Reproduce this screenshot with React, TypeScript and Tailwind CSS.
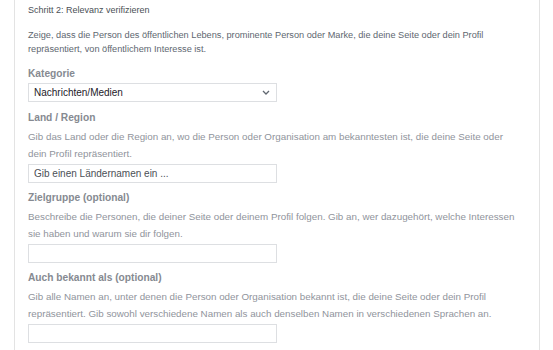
export default function App() {
  const font = { fontFamily: '"Liberation Sans", Arial, sans-serif' };
  return (
    <div className="w-[553px] h-[350px] overflow-hidden bg-white" style={font}>
      <div className="ml-[14px] w-[526px] min-h-[350px] border-x border-[#e3e3e3] pl-[13px] pr-[16px]">
        <div className="pt-[3px] text-[9px] leading-[14px] text-[#4b4f56]">Schritt 2: Relevanz verifizieren</div>
        <p className="mt-[12px] text-[9.2px] leading-[13.5px] text-[#606770]">
          Zeige, dass die Person des öffentlichen Lebens, prominente Person oder Marke, die deine Seite oder dein Profil repräsentiert, von öffentlichem Interesse ist.
        </p>

        <div className="mt-[10px] text-[10.2px] leading-[16px] font-bold text-[#868a91]">Kategorie</div>
        <div className="mt-[1px] w-[249px] h-[19px] border border-[#dddfe2] flex items-center justify-between pl-[5px] pr-[6px] text-[10px] text-[#1d2129]">
          <span>Nachrichten/Medien</span>
          <svg width="8" height="5" viewBox="0 0 8 5" fill="none" stroke="#606770" strokeWidth="1.3">
            <path d="M1 1l3 3 3-3" />
          </svg>
        </div>

        <div className="mt-[8px] text-[10.2px] leading-[16px] font-bold text-[#868a91]">Land / Region</div>
        <p className="mt-[2px] text-[9.8px] leading-[17px] text-[#90949c]">
          Gib das Land oder die Region an, wo die Person oder Organisation am bekanntesten ist, die deine Seite oder dein Profil repräsentiert.
        </p>
        <div className="mt-[2px] w-[249px] h-[19px] border border-[#dddfe2] flex items-center pl-[5px] text-[10px] text-[#4b4f56]">
          Gib einen Ländernamen ein ...
        </div>

        <div className="mt-[7px] text-[10.2px] leading-[16px] font-bold text-[#868a91]">Zielgruppe (optional)</div>
        <p className="mt-[2px] text-[9.8px] leading-[17px] text-[#90949c]">
          Beschreibe die Personen, die deiner Seite oder deinem Profil folgen. Gib an, wer dazugehört, welche Interessen sie haben und warum sie dir folgen.
        </p>
        <div className="mt-[2px] w-[249px] h-[19px] border border-[#dddfe2]" />

        <div className="mt-[7px] text-[10.2px] leading-[16px] font-bold text-[#868a91]">Auch bekannt als (optional)</div>
        <p className="mt-[2px] text-[9.8px] leading-[17px] text-[#90949c]">
          Gib alle Namen an, unter denen die Person oder Organisation bekannt ist, die deine Seite oder dein Profil repräsentiert. Gib sowohl verschiedene Namen als auch denselben Namen in verschiedenen Sprachen an.
        </p>
        <div className="mt-[2px] w-[249px] h-[19px] border border-[#dddfe2]" />
      </div>
    </div>
  );
}
